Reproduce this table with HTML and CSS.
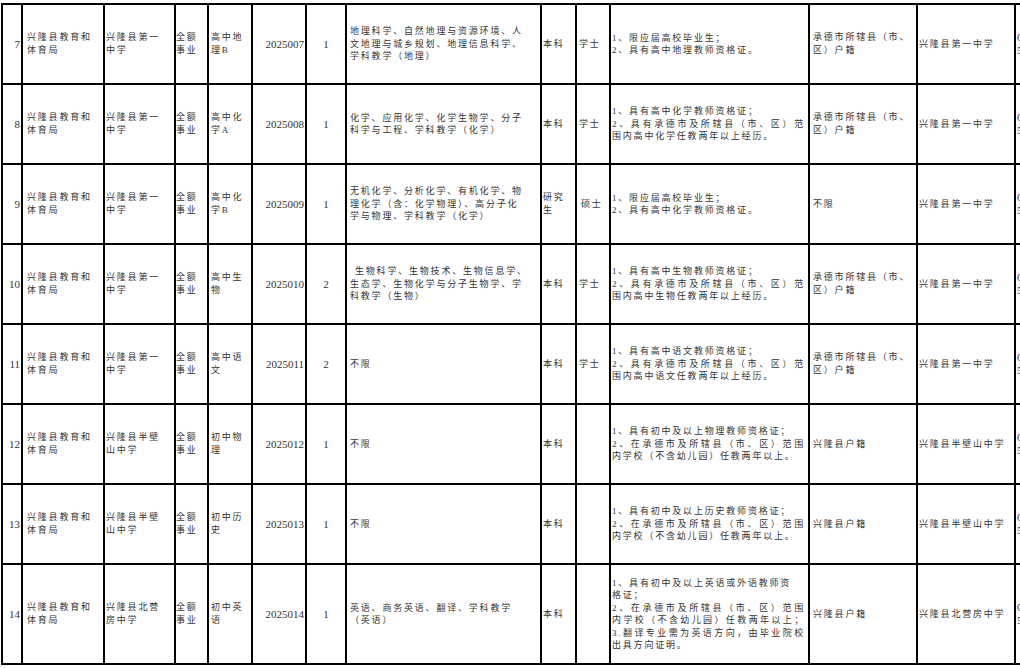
FILE: index.html
```html
<!DOCTYPE html>
<html lang="zh-CN">
<head>
<meta charset="utf-8">
<title>招聘岗位表</title>
<link rel="stylesheet" href="styles.css">
</head>
<body>
<div class="sheet">
  <div class="grid">
    <!-- row 7 -->
    <div class="cell c0">7</div>
    <div class="cell c1"><span class="l">兴隆县教育和</span><span class="l">体育局</span></div>
    <div class="cell c2"><span class="l">兴隆县第一</span><span class="l">中学</span></div>
    <div class="cell c3"><span class="l">全额</span><span class="l">事业</span></div>
    <div class="cell c4"><span class="l">高中地</span><span class="l">理B</span></div>
    <div class="cell c5">2025007</div>
    <div class="cell c6">1</div>
    <div class="cell c7"><span class="l">地理科学、自然地理与资源环境、人</span><span class="l">文地理与城乡规划、地理信息科学、</span><span class="l">学科教学（地理）</span></div>
    <div class="cell c8"><span class="l">本科</span></div>
    <div class="cell c9"><span class="l">学士</span></div>
    <div class="cell c10"><span class="l">1、限应届高校毕业生；</span><span class="l">2、具有高中地理教师资格证。</span></div>
    <div class="cell c11"><span class="l">承德市所辖县（市、</span><span class="l">区）户籍</span></div>
    <div class="cell c12"><span class="l">兴隆县第一中学</span></div>
    <div class="cell c13"><span class="l">0314-</span><span class="l">5051025</span></div>

    <!-- row 8 -->
    <div class="cell c0">8</div>
    <div class="cell c1"><span class="l">兴隆县教育和</span><span class="l">体育局</span></div>
    <div class="cell c2"><span class="l">兴隆县第一</span><span class="l">中学</span></div>
    <div class="cell c3"><span class="l">全额</span><span class="l">事业</span></div>
    <div class="cell c4"><span class="l">高中化</span><span class="l">学A</span></div>
    <div class="cell c5">2025008</div>
    <div class="cell c6">1</div>
    <div class="cell c7"><span class="l">化学、应用化学、化学生物学、分子</span><span class="l">科学与工程、学科教学（化学）</span></div>
    <div class="cell c8"><span class="l">本科</span></div>
    <div class="cell c9"><span class="l">学士</span></div>
    <div class="cell c10"><span class="l">1、具有高中化学教师资格证；</span><span class="l j">2、具有承德市及所辖县（市、区）范</span><span class="l">围内高中化学任教两年以上经历。</span></div>
    <div class="cell c11"><span class="l">承德市所辖县（市、</span><span class="l">区）户籍</span></div>
    <div class="cell c12"><span class="l">兴隆县第一中学</span></div>
    <div class="cell c13"><span class="l">0314-</span><span class="l">5051025</span></div>

    <!-- row 9 -->
    <div class="cell c0">9</div>
    <div class="cell c1"><span class="l">兴隆县教育和</span><span class="l">体育局</span></div>
    <div class="cell c2"><span class="l">兴隆县第一</span><span class="l">中学</span></div>
    <div class="cell c3"><span class="l">全额</span><span class="l">事业</span></div>
    <div class="cell c4"><span class="l">高中化</span><span class="l">学B</span></div>
    <div class="cell c5">2025009</div>
    <div class="cell c6">1</div>
    <div class="cell c7"><span class="l">无机化学、分析化学、有机化学、物</span><span class="l">理化学（含：化学物理）、高分子化</span><span class="l">学与物理、学科教学（化学）</span></div>
    <div class="cell c8"><span class="l">研究</span><span class="l">生</span></div>
    <div class="cell c9 c9b"><span class="l">硕士</span></div>
    <div class="cell c10"><span class="l">1、限应届高校毕业生；</span><span class="l">2、具有高中化学教师资格证。</span></div>
    <div class="cell c11"><span class="l">不限</span></div>
    <div class="cell c12"><span class="l">兴隆县第一中学</span></div>
    <div class="cell c13"><span class="l">0314-</span><span class="l">5051025</span></div>

    <!-- row 10 -->
    <div class="cell c0">10</div>
    <div class="cell c1"><span class="l">兴隆县教育和</span><span class="l">体育局</span></div>
    <div class="cell c2"><span class="l">兴隆县第一</span><span class="l">中学</span></div>
    <div class="cell c3"><span class="l">全额</span><span class="l">事业</span></div>
    <div class="cell c4"><span class="l">高中生</span><span class="l">物</span></div>
    <div class="cell c5">2025010</div>
    <div class="cell c6">2</div>
    <div class="cell c7"><span class="l ind">生物科学、生物技术、生物信息学、</span><span class="l">生态学、生物化学与分子生物学、学</span><span class="l">科教学（生物）</span></div>
    <div class="cell c8"><span class="l">本科</span></div>
    <div class="cell c9"><span class="l">学士</span></div>
    <div class="cell c10"><span class="l">1、具有高中生物教师资格证；</span><span class="l j">2、具有承德市及所辖县（市、区）范</span><span class="l">围内高中生物任教两年以上经历。</span></div>
    <div class="cell c11"><span class="l">承德市所辖县（市、</span><span class="l">区）户籍</span></div>
    <div class="cell c12"><span class="l">兴隆县第一中学</span></div>
    <div class="cell c13"><span class="l">0314-</span><span class="l">5051025</span></div>

    <!-- row 11 -->
    <div class="cell c0">11</div>
    <div class="cell c1"><span class="l">兴隆县教育和</span><span class="l">体育局</span></div>
    <div class="cell c2"><span class="l">兴隆县第一</span><span class="l">中学</span></div>
    <div class="cell c3"><span class="l">全额</span><span class="l">事业</span></div>
    <div class="cell c4"><span class="l">高中语</span><span class="l">文</span></div>
    <div class="cell c5">2025011</div>
    <div class="cell c6">2</div>
    <div class="cell c7"><span class="l">不限</span></div>
    <div class="cell c8"><span class="l">本科</span></div>
    <div class="cell c9"><span class="l">学士</span></div>
    <div class="cell c10"><span class="l">1、具有高中语文教师资格证；</span><span class="l j">2、具有承德市及所辖县（市、区）范</span><span class="l">围内高中语文任教两年以上经历。</span></div>
    <div class="cell c11"><span class="l">承德市所辖县（市、</span><span class="l">区）户籍</span></div>
    <div class="cell c12"><span class="l">兴隆县第一中学</span></div>
    <div class="cell c13"><span class="l">0314-</span><span class="l">5051025</span></div>

    <!-- row 12 -->
    <div class="cell c0">12</div>
    <div class="cell c1"><span class="l">兴隆县教育和</span><span class="l">体育局</span></div>
    <div class="cell c2"><span class="l">兴隆县半壁</span><span class="l">山中学</span></div>
    <div class="cell c3"><span class="l">全额</span><span class="l">事业</span></div>
    <div class="cell c4"><span class="l">初中物</span><span class="l">理</span></div>
    <div class="cell c5">2025012</div>
    <div class="cell c6">1</div>
    <div class="cell c7"><span class="l">不限</span></div>
    <div class="cell c8"><span class="l">本科</span></div>
    <div class="cell c9"></div>
    <div class="cell c10"><span class="l">1、具有初中及以上物理教师资格证；</span><span class="l j">2、在承德市及所辖县（市、区）范围</span><span class="l">内学校（不含幼儿园）任教两年以上。</span></div>
    <div class="cell c11"><span class="l">兴隆县户籍</span></div>
    <div class="cell c12"><span class="l">兴隆县半壁山中学</span></div>
    <div class="cell c13"><span class="l">0314-</span><span class="l">5051025</span></div>

    <!-- row 13 -->
    <div class="cell c0">13</div>
    <div class="cell c1"><span class="l">兴隆县教育和</span><span class="l">体育局</span></div>
    <div class="cell c2"><span class="l">兴隆县半壁</span><span class="l">山中学</span></div>
    <div class="cell c3"><span class="l">全额</span><span class="l">事业</span></div>
    <div class="cell c4"><span class="l">初中历</span><span class="l">史</span></div>
    <div class="cell c5">2025013</div>
    <div class="cell c6">1</div>
    <div class="cell c7"><span class="l">不限</span></div>
    <div class="cell c8"><span class="l">本科</span></div>
    <div class="cell c9"></div>
    <div class="cell c10"><span class="l">1、具有初中及以上历史教师资格证；</span><span class="l j">2、在承德市及所辖县（市、区）范围</span><span class="l">内学校（不含幼儿园）任教两年以上。</span></div>
    <div class="cell c11"><span class="l">兴隆县户籍</span></div>
    <div class="cell c12"><span class="l">兴隆县半壁山中学</span></div>
    <div class="cell c13"><span class="l">0314-</span><span class="l">5051025</span></div>

    <!-- row 14 -->
    <div class="cell c0">14</div>
    <div class="cell c1"><span class="l">兴隆县教育和</span><span class="l">体育局</span></div>
    <div class="cell c2"><span class="l">兴隆县北营</span><span class="l">房中学</span></div>
    <div class="cell c3"><span class="l">全额</span><span class="l">事业</span></div>
    <div class="cell c4"><span class="l">初中英</span><span class="l">语</span></div>
    <div class="cell c5">2025014</div>
    <div class="cell c6">1</div>
    <div class="cell c7"><span class="l">英语、商务英语、翻译、学科教学</span><span class="l">（英语）</span></div>
    <div class="cell c8"><span class="l">本科</span></div>
    <div class="cell c9"></div>
    <div class="cell c10"><span class="l">1、具有初中及以上英语或外语教师资</span><span class="l">格证；</span><span class="l j">2、在承德市及所辖县（市、区）范围</span><span class="l j">内学校（不含幼儿园）任教两年以上；</span><span class="l j">3.翻译专业需为英语方向，由毕业院校</span><span class="l">出具方向证明。</span></div>
    <div class="cell c11"><span class="l">兴隆县户籍</span></div>
    <div class="cell c12"><span class="l">兴隆县北营房中学</span></div>
    <div class="cell c13"><span class="l">0314-</span><span class="l">5051025</span></div>
  </div>
</div>
</body>
</html>
```

FILE: styles.css
```css
* {
  box-sizing: border-box;
  margin: 0;
  padding: 0;
}

html, body {
  background: #ffffff;
  overflow: hidden;
}

body {
  width: 1020px;
  height: 668px;
}

.sheet {
  padding: 3px 0 0 1px;
}

.grid {
  display: grid;
  width: max-content;
  grid-template-columns: 20px 82px 71px 33px 44px 54px 40px 195px 35px 34px 199px 108px 98px 60px;
  grid-template-rows: repeat(7, 80px) 100px;
  border-top: 2px solid #000;
  border-left: 2px solid #000;
  font-family: "Liberation Serif", "Noto Sans CJK SC", serif;
  font-size: 9px;
  letter-spacing: 1.8px;
  line-height: 13px;
  color: #333;
}

.cell {
  display: flex;
  flex-direction: column;
  justify-content: center;
  border-right: 2px solid #000;
  border-bottom: 2px solid #000;
  white-space: nowrap;
  overflow: hidden;
}

.l {
  display: block;
}

.j {
  text-align: justify;
  text-align-last: justify;
}

.ind {
  padding-left: 5px;
}

.c0 {
  align-items: flex-end;
  padding-right: 1px;
  font-size: 11px;
  letter-spacing: 0;
}

.c1 { padding-left: 4px; }
.c2 { padding-left: 1px; }
.c3 { padding-left: 0; }
.c4 { padding-left: 2px; }

.c5 {
  align-items: flex-end;
  padding-right: 1px;
  font-size: 11px;
  letter-spacing: 0;
}

.c6 {
  align-items: center;
  font-size: 11px;
  letter-spacing: 0;
}

.c7 {
  padding-left: 3px;
  line-height: 12.5px;
}

.c8 { padding-left: 1px; }
.c9 { padding-left: 2px; }
.c9b { padding-left: 4px; }

.c10 {
  padding-left: 1px;
  padding-right: 3px;
  line-height: 12.5px;
}

.c11 { padding-left: 3px; }
.c12 { padding-left: 1px; }

.c13 {
  padding-left: 1px;
  font-size: 11px;
  letter-spacing: 0;
  border-right: none;
}
```
